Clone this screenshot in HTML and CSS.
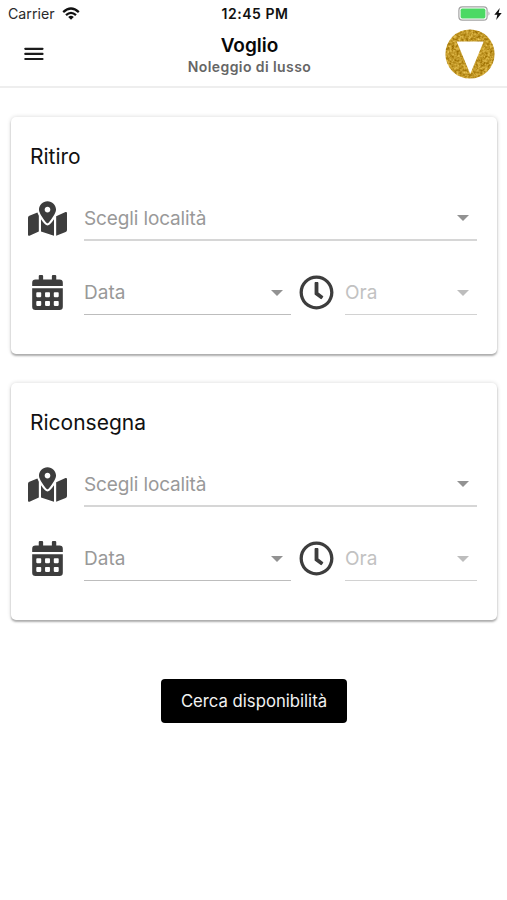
FILE: index.html
```html
<!DOCTYPE html>
<html lang="it">
<head>
<meta charset="utf-8">
<title>Voglio</title>
<link rel="stylesheet" href="styles.css">
</head>
<body>
<svg class="defs" aria-hidden="true">
  <symbol id="map" viewBox="0 0 576 512"><path d="M288 0c-69.59 0-126 56.41-126 126 0 56.26 82.35 158.8 113.9 196.02 6.39 7.54 17.82 7.54 24.2 0C331.65 284.8 414 182.26 414 126 414 56.41 357.59 0 288 0zm0 168c-23.2 0-42-18.8-42-42s18.8-42 42-42 42 18.8 42 42-18.8 42-42 42zM20.12 215.95A32.006 32.006 0 0 0 0 245.66v250.32c0 11.32 11.43 19.06 21.94 14.86L160 448V214.92c-8.84-15.98-16.07-31.54-21.25-46.42L20.12 215.95zM288 359.67c-14.07 0-27.38-6.18-36.51-16.96-19.66-23.2-40.57-49.62-59.49-76.72v182l192 64V266c-18.92 27.09-39.82 53.52-59.49 76.72-9.13 10.77-22.44 16.95-36.51 16.95zm266.06-198.51L416 224v288l139.88-55.95A31.996 31.996 0 0 0 576 426.34V176.02c0-11.32-11.43-19.06-21.94-14.86z"/></symbol>
  <symbol id="calendar" viewBox="0 0 448 512"><path fill-rule="evenodd" d="M0 464a48 48 0 0 0 48 48h352a48 48 0 0 0 48-48V192H0zM72 252h48q12 0 12 12v48q0 12-12 12H72q-12 0-12-12v-48q0-12 12-12zm128 0h48q12 0 12 12v48q0 12-12 12h-48q-12 0-12-12v-48q0-12 12-12zm128 0h48q12 0 12 12v48q0 12-12 12h-48q-12 0-12-12v-48q0-12 12-12zM72 380h48q12 0 12 12v48q0 12-12 12H72q-12 0-12-12v-48q0-12 12-12zm128 0h48q12 0 12 12v48q0 12-12 12h-48q-12 0-12-12v-48q0-12 12-12zm128 0h48q12 0 12 12v48q0 12-12 12h-48q-12 0-12-12v-48q0-12 12-12zM400 64h-48V16q0-16-16-16h-32q-16 0-16 16v48H160V16q0-16-16-16h-32q-16 0-16 16v48H48a48 48 0 0 0-48 48v48h448v-48a48 48 0 0 0-48-48z"/></symbol>
  <symbol id="clock" viewBox="0 0 512 512"><path d="M256 8C119 8 8 119 8 256s111 248 248 248 248-111 248-248S393 8 256 8zm0 448c-110.5 0-200-89.5-200-200S145.500 56 256 56s200 89.500 200 200-89.500 200-200 200zm61.800-104.400l-84.900-61.700c-3.100-2.300-4.900-5.900-4.900-9.700V116c0-6.600 5.400-12 12-12h32c6.600 0 12 5.400 12 12v141.700l66.800 48.600c5.400 3.900 6.500 11.400 2.600 16.800L334.600 349c-3.900 5.300-11.400 6.500-16.800 2.600z"/></symbol>
</svg>

<header class="top">
  <div class="status">
    <div class="carrier"><span>Carrier</span>
      <svg class="wifi" viewBox="0 0 18 13"><g fill="none" stroke="#111" stroke-width="2.300"><path d="M1.200 5.100Q9-2 16.800 5.100M4 8.100q5-4.400 10 0"/></g><path fill="#111" d="M6.200 9.900q2.800-2.100 5.600 0L9 12.700z"/></svg>
    </div>
    <div class="time">12:45 PM</div>
    <div class="power">
      <svg class="battery" viewBox="0 0 33 15"><rect x=".9" y=".9" width="28.200" height="13.200" rx="3.400" fill="#fff" stroke="#a3a3a3" stroke-width="1.200"/><rect x="2.600" y="2.600" width="24.800" height="9.800" rx="1.600" fill="#4cd964"/><path fill="#a3a3a3" d="M30.500 5.200q2 2.300 0 4.600z"/></svg>
      <svg class="bolt" viewBox="0 0 8 12"><path fill="#111" d="M5.800 0 .3 6.800h3L2.200 12l5.500-7H4.600z"/></svg>
    </div>
  </div>
  <div class="bar">
    <svg class="menu" viewBox="0 0 20 14"><path d="M1.300 1.800h17.200M1.300 6.900h17.200M1.300 12h17.200" stroke="#1c1c1c" stroke-width="2.200" stroke-linecap="round"/></svg>
    <div class="titles">
      <h1>Voglio</h1>
      <p>Noleggio di lusso</p>
    </div>
    <svg class="logo" viewBox="0 0 50 50">
      <filter id="glitter" x="0" y="0" width="1" height="1" color-interpolation-filters="sRGB">
        <feTurbulence type="fractalNoise" baseFrequency=".42" numOctaves="2" seed="4"/>
        <feColorMatrix values=".5 0 0 0 .51  .55 0 0 0 .32  .55 0 0 0 -.12  0 0 0 0 1"/>
        <feComposite in2="SourceGraphic" operator="in"/>
      </filter>
      <circle cx="25" cy="25" r="24.600" fill="#c69a2a" filter="url(#glitter)"/>
      <path d="M11.700 12.500h27L25.200 45z" fill="#fff"/>
    </svg>
  </div>
</header>

<main>
  <section class="card">
    <h2>Ritiro</h2>
    <div class="row">
      <svg class="icon map"><use href="#map"/></svg>
      <div class="field place"><span>Scegli località</span><i class="caret"></i></div>
    </div>
    <div class="row">
      <svg class="icon cal"><use href="#calendar"/></svg>
      <div class="field date"><span>Data</span><i class="caret"></i></div>
      <svg class="icon clock"><use href="#clock"/></svg>
      <div class="field hour"><span>Ora</span><i class="caret"></i></div>
    </div>
  </section>
  <section class="card">
    <h2>Riconsegna</h2>
    <div class="row">
      <svg class="icon map"><use href="#map"/></svg>
      <div class="field place"><span>Scegli località</span><i class="caret"></i></div>
    </div>
    <div class="row">
      <svg class="icon cal"><use href="#calendar"/></svg>
      <div class="field date"><span>Data</span><i class="caret"></i></div>
      <svg class="icon clock"><use href="#clock"/></svg>
      <div class="field hour"><span>Ora</span><i class="caret"></i></div>
    </div>
  </section>
  <button class="search" type="button">Cerca disponibilità</button>
</main>
</body>
</html>
```
FILE: styles.css
```css
* { box-sizing: border-box; }
body {
  margin: 0;
  height: 900px;
  background: #fff;
  color: #111;
  font-family: Inter, "Liberation Sans", sans-serif;
}
h1, h2, p { margin: 0; }
svg { display: block; flex: none; }
.defs { display: none; }

.top { height: 88px; border-bottom: 2px solid #eee; }
.status {
  display: grid;
  grid-template-columns: 1fr auto 1fr;
  align-items: center;
  height: 27px;
  padding: 0 5px 0 8px;
}
.carrier { display: flex; align-items: center; gap: 7px; color: #2a2a2a; font-size: 14.2px; }
.wifi { width: 18px; height: 13px; }
.time { font-size: 14px; font-weight: 600; letter-spacing: .55px; }
.power { display: flex; align-items: center; justify-content: flex-end; gap: 3px; }
.battery { width: 33px; height: 15px; }
.bolt { width: 8px; height: 12px; }

.bar {
  display: grid;
  grid-template-columns: 70px 1fr 82px;
  height: 58px;
  padding: 0 12px 0 16px;
}
.menu { width: 20px; height: 14px; margin: 20px 0 0 8px; }
.titles { padding-top: 6px; text-align: center; }
h1 { font-size: 19px; line-height: 25px; font-weight: 600; color: #080808; }
.titles p { font-size: 14px; line-height: 17px; font-weight: 600; letter-spacing: .42px; color: #666; }
.logo { width: 50px; height: 50px; margin: 2px 0 0 auto; }

main { display: flex; flex-direction: column; padding: 29px 10px 0 11px; }
.card {
  height: 237px;
  margin-bottom: 29px;
  padding: 24px 20px 0 17px;
  border-radius: 5px;
  background: #fff;
  box-shadow: 0 2px 2px rgba(0, 0, 0, .28), 0 0 4px rgba(0, 0, 0, .16);
}
h2 { padding-left: 2px; font-size: 21px; line-height: 32px; font-weight: 400; }
.row { display: flex; align-items: center; height: 46px; margin-top: 22px; }
.row + .row { margin-top: 28px; }
.icon { fill: #3d3d3d; }
.map { width: 39px; height: 35px; }
.cal { width: 31px; height: 35px; margin: 0 4px; }
.clock { width: 35px; height: 35px; margin: 0 10px 0 8px; }
.field {
  display: flex;
  align-items: center;
  justify-content: space-between;
  height: 46px;
  padding: 2px 8px 0 0;
  border-bottom: 2px solid #d6d6d6;
  color: #999;
  font-size: 19px;
}
.place { flex: 1; margin-left: 17px; letter-spacing: -.13px; }
.date { width: 207px; margin-left: 17px; border-bottom: 1px solid #bdbdbd; }
.hour { flex: 1; margin-left: 1px; border-bottom: 1px solid #d2d2d2; color: #c2c2c2; }
.caret {
  border: 6px solid transparent;
  border-top-color: #929292;
  border-bottom: 0;
}
.hour .caret { border-top-color: #bdbdbd; }

.search {
  align-self: center;
  width: 186px;
  height: 44px;
  margin-top: 30px;
  padding: 0;
  border: 0;
  border-radius: 4px;
  background: #000;
  color: #f2f2f2;
  font: 16.7px Inter, "Liberation Sans", sans-serif;
}
```
